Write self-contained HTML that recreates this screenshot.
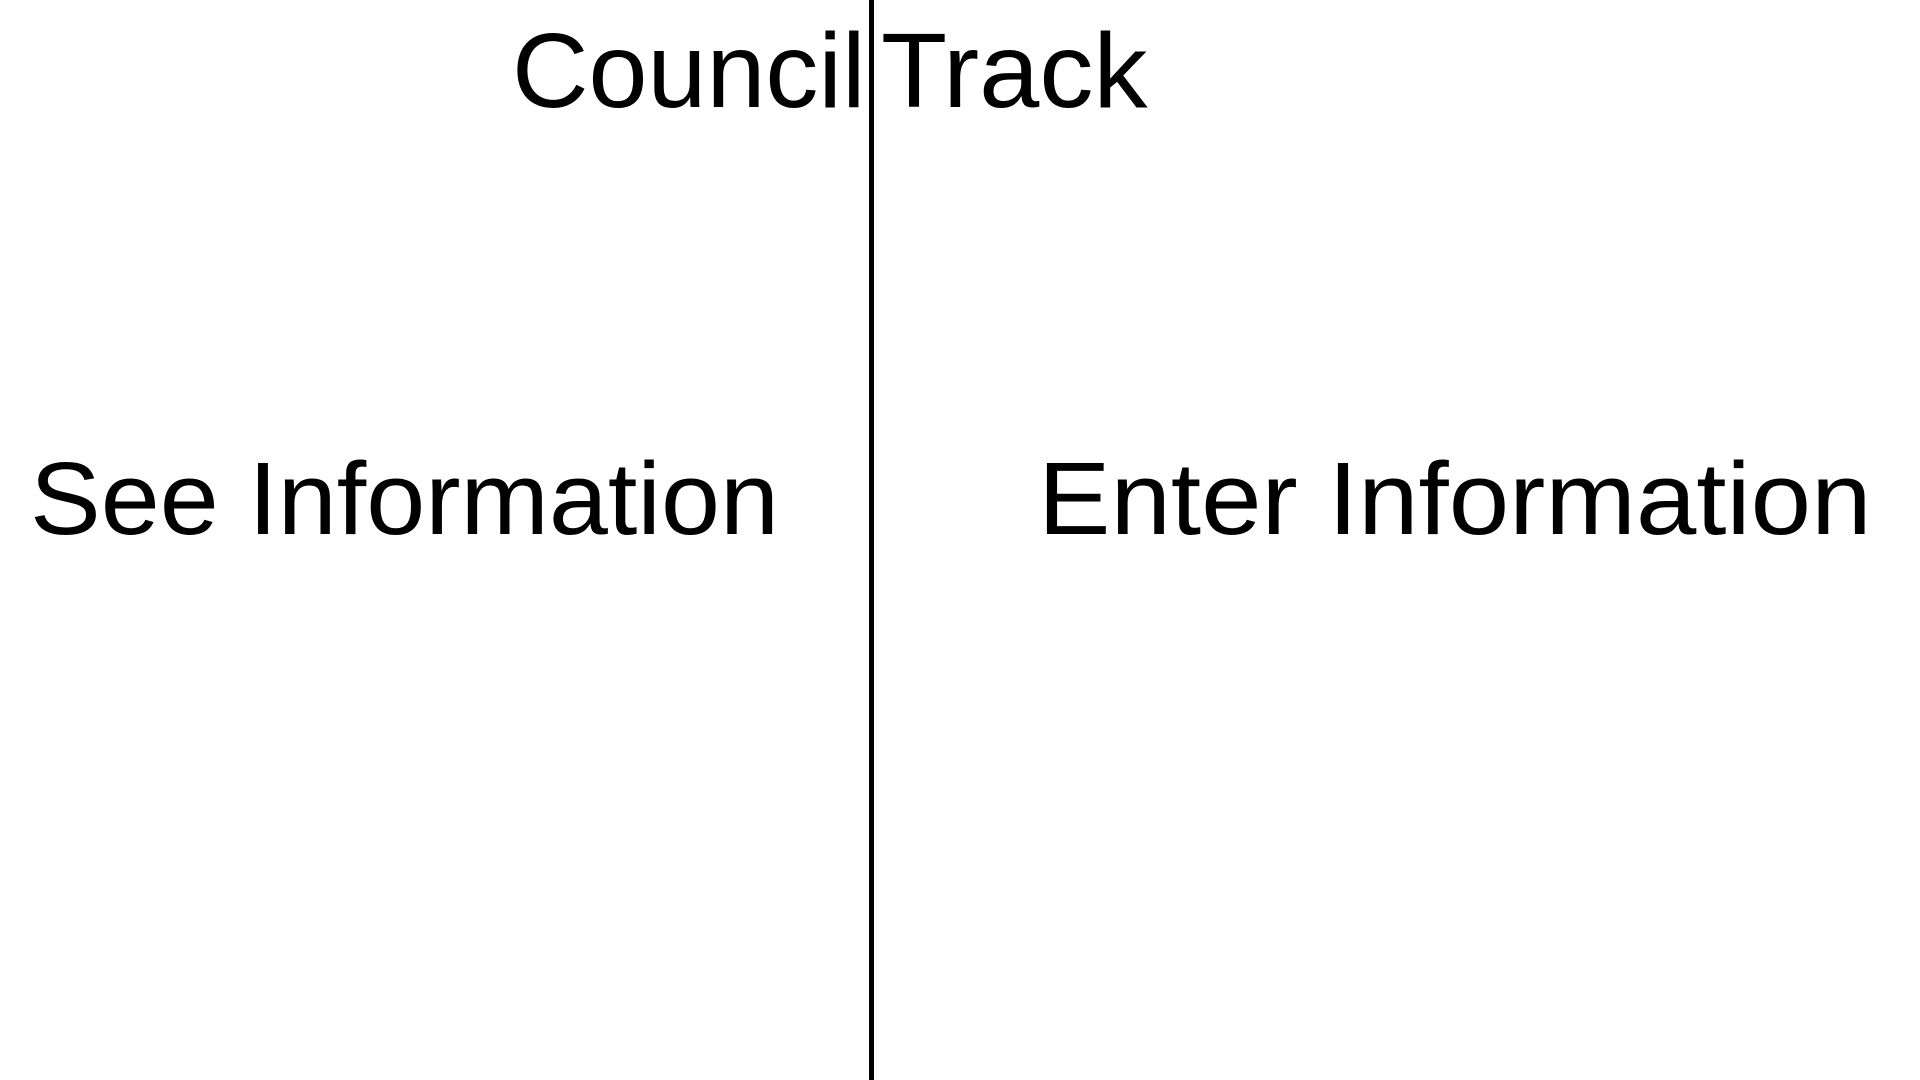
<!DOCTYPE html>
<html><head><meta charset="utf-8"><style>
html,body{margin:0;padding:0;background:#fff;width:1920px;height:1080px;overflow:hidden;position:relative;font-family:"Liberation Sans",sans-serif;color:#000}
.t{position:absolute;white-space:nowrap;transform-origin:0 0;line-height:1}
.line{position:absolute;left:869px;top:0;width:5px;height:1080px;background:#000}
</style></head><body>
<div class="line"></div>
<div class="t" style="left:512px;top:18px;font-size:106px;transform:scaleX(1.0)">Council</div>
<div class="t" style="left:881px;top:18px;font-size:106px;transform:scaleX(1.021)">Track</div>
<div class="t" style="left:30px;top:447px;font-size:103px;transform:scaleX(1.03)">See Information</div>
<div class="t" style="left:1038px;top:447px;font-size:103px;transform:scaleX(1.055)">Enter Information</div>
</body></html>
